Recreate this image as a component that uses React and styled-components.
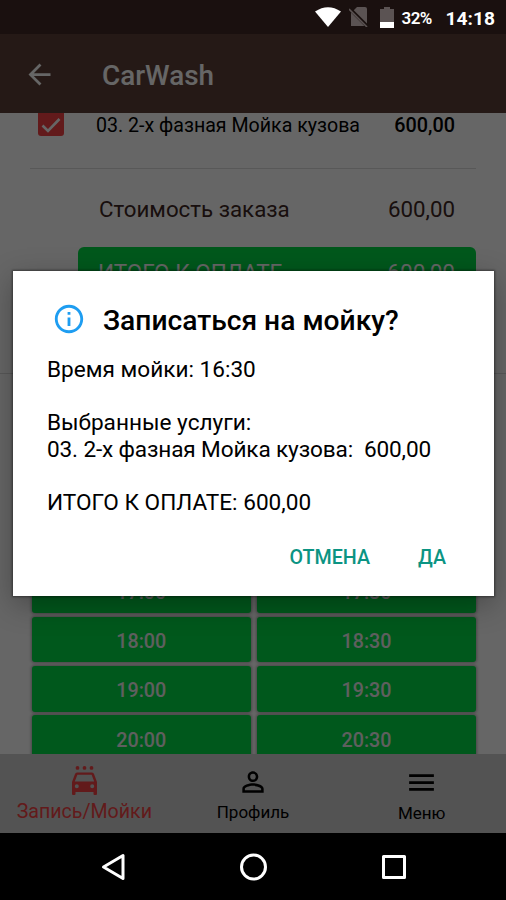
import React, { useState } from 'react'
import styled, { createGlobalStyle, ThemeProvider } from 'styled-components'
import { MdArrowBack, MdInfoOutline, MdMenu, MdPersonOutline } from 'react-icons/md'

const theme = {
  colors: {
    primary: '#5d4037',
    primaryDark: '#3e2723',
    accent: '#f44344',
    green: '#00dc46',
    teal: '#0b9483',
    info: '#1e9df1',
    divider: '#dcdcdc',
    tabBar: '#cfcfcf',
  },
}

const GlobalStyle = createGlobalStyle`
  * {
    box-sizing: border-box;
  }

  body {
    margin: 0;
    background: #000;
    font-family: Roboto, 'Noto Sans', sans-serif;
  }
`

const Phone = styled.div`
  display: flex;
  flex-direction: column;
  position: relative;
  width: 506px;
  height: 900px;
  overflow: hidden;
  background: #000;
`

const StatusBar = styled.div`
  display: flex;
  justify-content: flex-end;
  align-items: center;
  flex: none;
  height: 34px;
  padding-right: 11px;
  background: #1a100f;
  color: #fff;
`

const StatusIcon = styled.svg`
  display: block;
  flex: none;
  margin-right: ${props => props.$gap}px;
`

const Battery = styled.span`
  width: 31px;
  margin: 2px 13px 0 0;
  font-size: 17px;
  font-weight: 600;
  letter-spacing: -0.6px;
  white-space: nowrap;
`

const Clock = styled.span`
  margin-top: 2px;
  font-size: 19.2px;
  font-weight: 700;
`

const Screen = styled.div`
  display: flex;
  flex-direction: column;
  position: relative;
  flex: none;
  height: 799px;
  background: #fff;
`

const Header = styled.header`
  display: flex;
  align-items: center;
  flex: none;
  height: 79px;
  padding: 1px 23px 0;
  gap: 46px;
  background: ${props => props.theme.colors.primary};
  color: #fff;
`

const HeaderTitle = styled.h1`
  margin: 0;
  padding-top: 4px;
  font-size: 27.9px;
  font-weight: 500;
  line-height: 32px;
`

const Content = styled.main`
  display: flex;
  flex-direction: column;
  flex: none;
  height: 641px;
  overflow: hidden;
`

const Order = styled.section`
  flex: none;
  height: 261px;
  padding: 0 30px;
  border-bottom: 1px solid ${props => props.theme.colors.divider};
`

const ServiceRow = styled.div`
  display: flex;
  align-items: flex-start;
  height: 56px;
  padding: 0 21px 0 8px;
  border-bottom: 1px solid ${props => props.theme.colors.divider};
  color: #000;
`

const CheckBox = styled.span`
  display: flex;
  justify-content: center;
  align-items: center;
  width: 26px;
  height: 23px;
  margin-right: 32px;
  border-radius: 0 0 3px 3px;
  background: ${props => props.theme.colors.accent};
`

const ServiceName = styled.span`
  flex: 1;
  font-size: 19.6px;
  line-height: 25px;
  white-space: nowrap;
`

const ServicePrice = styled.span`
  font-size: 19.8px;
  font-weight: 500;
  line-height: 25px;
`

const CostRow = styled.div`
  display: flex;
  justify-content: space-between;
  align-items: center;
  height: 78px;
  padding: 1px 21px 0 69px;
  font-size: 22.3px;
  color: ${props => props.theme.colors.primaryDark};
`

const TotalRow = styled.div`
  display: flex;
  justify-content: space-between;
  height: 54px;
  margin-left: 48px;
  padding: 13px 21px 0 20px;
  border-radius: 6px;
  background: ${props => props.theme.colors.green};
  font-size: 22.5px;
  line-height: 25px;
  color: #fff;
`

const Slots = styled.section`
  display: grid;
  grid-template-columns: 218.5px 219px;
  grid-auto-rows: 45.5px;
  gap: 3.8px 6.5px;
  padding: 193.5px 0 0 32px;
`

const Slot = styled.button`
  padding: 4px 0 0;
  border: 0;
  border-radius: 3px;
  background: ${props => props.theme.colors.green};
  box-shadow: 0 0 3px 1px rgba(0, 0, 0, 0.3);
  font-family: inherit;
  font-size: 19.7px;
  font-weight: 500;
  color: #eee;
`

const TabBar = styled.nav`
  display: grid;
  grid-template-columns: repeat(3, 1fr);
  flex: none;
  height: 79px;
  background: ${props => props.theme.colors.tabBar};
`

const Tab = styled.a`
  display: flex;
  flex-direction: column;
  align-items: center;
  padding-top: 12px;
  font-size: ${props => props.$active ? 19.6 : 17}px;
  line-height: 26px;
  white-space: nowrap;
  color: ${props => props.$active ? props.theme.colors.accent : '#000'};

  svg {
    flex: none;
    margin-bottom: 1px;
  }
`

const Scrim = styled.div`
  display: flex;
  align-items: flex-start;
  position: absolute;
  inset: 0;
  padding: 237px 12px 0 13px;
  background: rgba(0, 0, 0, 0.6);
`

const Dialog = styled.div`
  width: 481px;
  height: 325px;
  padding: 32px 34px 0;
  background: #fff;
  box-shadow: 0 0 2px 1px rgba(0, 0, 0, 0.4), 0 8px 28px rgba(0, 0, 0, 0.3);
  color: #000;
`

const DialogTitle = styled.h2`
  display: flex;
  align-items: center;
  gap: 17px;
  height: 34px;
  margin: 0 0 20px 5px;
  font-size: 28.2px;
  font-weight: 500;
  white-space: nowrap;

  svg {
    flex: none;
    margin-top: -3px;
    color: ${props => props.theme.colors.info};
  }
`

const DialogLine = styled.p`
  height: 26.7px;
  margin: 0;
  font-size: 22.6px;
  line-height: 26.7px;
  letter-spacing: ${props => props.$tight ? '-0.14px' : 'normal'};
  white-space: pre;
`

const DialogActions = styled.div`
  display: flex;
  justify-content: flex-end;
  gap: 48px;
  margin-top: 28px;
  padding-right: 14px;
`

const DialogButton = styled.button`
  padding: 0;
  border: 0;
  background: none;
  font-family: inherit;
  font-size: 19.7px;
  font-weight: 500;
  line-height: 26px;
  color: ${props => props.theme.colors.teal};
`

const SystemNav = styled.div`
  display: flex;
  justify-content: center;
  align-items: center;
  flex: none;
  height: 67px;
  gap: 113px;
  background: #000;
`

const slots = ['17:00', '17:30', '18:00', '18:30', '19:00', '19:30', '20:00', '20:30']

const message = [
  'Время мойки: 16:30',
  '',
  'Выбранные услуги:',
  '03. 2-х фазная Мойка кузова:  600,00',
  '',
  'ИТОГО К ОПЛАТЕ: 600,00',
]

const CarWashIcon = () => (
  <svg width='32' height='32' viewBox='0 0 32 32' fill='currentColor'>
    <circle cx='9.5' cy='1.9' r='1.9' />
    <circle cx='16.5' cy='1.9' r='1.9' />
    <circle cx='23.5' cy='1.9' r='1.9' />
    <path
      fillRule='evenodd'
      d='M9 6.5H24Q25.5 6.5 26 8L29 16V28Q29 29 28 29H26.5Q25.5 29 25.5 28V26H7.5V28Q7.5 29 6.5 29H5Q4 29 4 28V16L7 8Q7.5 6.5 9 6.5ZM9.4 8.7L6.8 15.5H26.2L23.6 8.7ZM8.8 18.3A2 2 0 1 0 8.8 22.3A2 2 0 1 0 8.8 18.3ZM24.2 18.3A2 2 0 1 0 24.2 22.3A2 2 0 1 0 24.2 18.3Z'
    />
  </svg>
)

const ConfirmDialog = ({ onClose }) => (
  <Scrim>
    <Dialog role='dialog'>
      <DialogTitle>
        <MdInfoOutline size={34} />
        Записаться на мойку?
      </DialogTitle>
      {message.map((line, index) =>
        <DialogLine key={index} $tight={line.startsWith('03')}>{line}</DialogLine>
      )}
      <DialogActions>
        <DialogButton onClick={onClose}>ОТМЕНА</DialogButton>
        <DialogButton onClick={onClose}>ДА</DialogButton>
      </DialogActions>
    </Dialog>
  </Scrim>
)

const Status = () => (
  <StatusBar>
    <StatusIcon $gap={8} width='26' height='20' viewBox='0 0 26 20'>
      <path d='M0 4.5Q13-4 26 4.5L13 20Z' fill='#fff' />
    </StatusIcon>
    <StatusIcon $gap={11} width='20' height='20' viewBox='0 0 20 20'>
      <path d='M8 0H16Q18 0 18 2V19H2V6Z' fill='#5b5353' />
      <path d='M0 1L19 20' stroke='#1a100f' strokeWidth='3.5' />
      <path d='M0 2L18 20' stroke='#5b5353' strokeWidth='1.6' />
    </StatusIcon>
    <StatusIcon $gap={8} width='14' height='21' viewBox='0 0 14 21'>
      <path d='M4 0H10V2H14V21H0V2H4Z' fill='#5b5353' />
      <path d='M0 15H14V21H0Z' fill='#fff' />
    </StatusIcon>
    <Battery>32%</Battery>
    <Clock>14:18</Clock>
  </StatusBar>
)

const App = () => {

  const [ dialogOpen, setDialogOpen ] = useState(true)

  return (
    <ThemeProvider theme={theme}>
      <GlobalStyle />
      <Phone>
        <Status />
        <Screen>
          <Header>
            <MdArrowBack size={33} />
            <HeaderTitle>CarWash</HeaderTitle>
          </Header>
          <Content>
            <Order>
              <ServiceRow>
                <CheckBox>
                  <svg width='20' height='16' viewBox='0 0 20 16' fill='none' stroke='#fff' strokeWidth='2.6'>
                    <path d='M1.5 8.5L7 14L18.5 2' />
                  </svg>
                </CheckBox>
                <ServiceName>03. 2-х фазная Мойка кузова</ServiceName>
                <ServicePrice>600,00</ServicePrice>
              </ServiceRow>
              <CostRow>
                <span>Стоимость заказа</span>
                <span>600,00</span>
              </CostRow>
              <TotalRow>
                <span>ИТОГО К ОПЛАТЕ</span>
                <span>600,00</span>
              </TotalRow>
            </Order>
            <Slots>
              {slots.map(slot => <Slot key={slot}>{slot}</Slot>)}
            </Slots>
          </Content>
          <TabBar>
            <Tab $active>
              <CarWashIcon />
              Запись/Мойки
            </Tab>
            <Tab>
              <MdPersonOutline size={32} />
              Профиль
            </Tab>
            <Tab>
              <MdMenu size={33} />
              Меню
            </Tab>
          </TabBar>
          {dialogOpen && <ConfirmDialog onClose={() => setDialogOpen(false)} />}
        </Screen>
        <SystemNav>
          <svg width='27' height='30' viewBox='0 0 27 30' fill='none' stroke='#fff' strokeWidth='3' strokeLinejoin='round'>
            <path d='M3.5 15L23 3.5V26.5Z' />
          </svg>
          <svg width='28' height='28' viewBox='0 0 28 28' fill='none' stroke='#fff' strokeWidth='3'>
            <circle cx='13.5' cy='14' r='12' />
          </svg>
          <svg width='26' height='26' viewBox='0 0 26 26' fill='none' stroke='#fff' strokeWidth='3' strokeLinejoin='round'>
            <path d='M2.5 2.5H23.5V23.5H2.5Z' />
          </svg>
        </SystemNav>
      </Phone>
    </ThemeProvider>
  )
}

export default App
